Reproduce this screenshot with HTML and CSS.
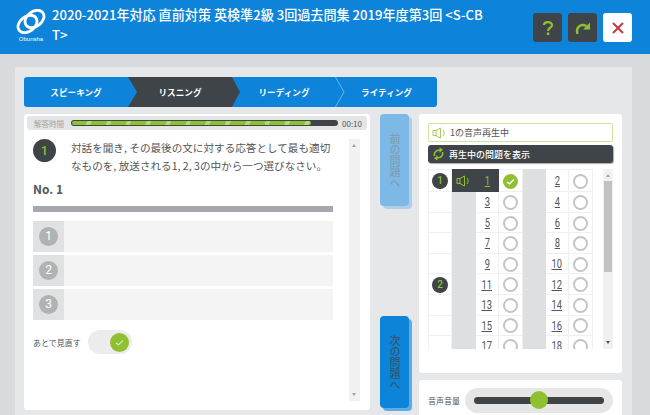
FILE: index.html
```html
<!DOCTYPE html>
<html lang="ja">
<head>
    <meta charset="UTF-8">
    <meta name="viewport" content="width=device-width, initial-scale=1.0">
    <title>2020-2021年対応 直前対策 英検準2級</title>
    <link rel="stylesheet" href="styles.css">
</head>
<body>
    <header class="header">
        <div class="logo">
            <svg width="32" height="25" viewBox="0 0 32 25">
                <ellipse cx="12.5" cy="15" rx="10.5" ry="7.5" transform="rotate(-38 12.5 15)" fill="none" stroke="#fff" stroke-width="2.8"/>
                <ellipse cx="19.5" cy="10" rx="10.5" ry="7.5" transform="rotate(-38 19.5 10)" fill="none" stroke="#fff" stroke-width="2.8"/>
            </svg>
            <span class="logo-name">Obunsha</span>
        </div>
        <h1 class="title">2020-2021年対応 直前対策 英検準2級 3回過去問集 2019年度第3回 &lt;S-CBT&gt;</h1>
        <div class="header-btns">
            <button class="head-btn">
                <svg width="14" height="16" viewBox="0 0 14 16"><path d="M3 5 C3 1.5 11 1 11 5 C11 8 7 7.500 7 11" fill="none" stroke="#8fc031" stroke-width="2.200"/><rect x="5.800" y="12.500" width="2.500" height="2.500" fill="#8fc031"/></svg>
            </button>
            <button class="head-btn">
                <svg width="16" height="14" viewBox="0 0 16 14"><path d="M2.500 13 C0.500 6 6 2 11.500 5" fill="none" stroke="#8fc031" stroke-width="2.400"/><path d="M15 1.500 V8.500 H8 Z" fill="#8fc031"/></svg>
            </button>
            <button class="head-btn head-btn-close">
                <svg width="12" height="12" viewBox="0 0 12 12"><path d="M1 1 L11 11 M11 1 L1 11" stroke="#c8383c" stroke-width="2"/></svg>
            </button>
        </div>
    </header>

    <div class="main">
        <div class="tabs">
            <div class="tab">スピーキング</div>
            <div class="tab tab-active">リスニング</div>
            <div class="tab">リーディング
                <svg class="tab-sep" width="10" height="30" viewBox="0 0 10 30"><path d="M0.500 0 L9 15 L0.500 30" fill="none" stroke="#6db4e8"/></svg>
            </div>
            <div class="tab">ライティング</div>
        </div>

        <div class="columns">
            <section class="question-panel">
                <div class="timer">
                    <span class="timer-label">解答時間</span>
                    <div class="timer-bar"><div class="timer-fill" style="width: 90%"></div></div>
                    <span class="timer-time">00:10</span>
                </div>
                <div class="question-body">
                    <div class="question-main">
                        <div class="question-head">
                            <span class="badge badge-big">1</span>
                            <p class="question-text">対話を聞き, その最後の文に対する応答として最も適切なものを, 放送される1, 2, 3の中から一つ選びなさい。</p>
                        </div>
                        <div class="question-no">No. 1</div>
                        <div class="rule"></div>
                        <div class="option"><div class="option-num"><span>1</span></div></div>
                        <div class="option"><div class="option-num"><span>2</span></div></div>
                        <div class="option"><div class="option-num"><span>3</span></div></div>
                        <div class="review">
                            <span class="review-label">あとで見直す</span>
                            <div class="toggle">
                                <span class="toggle-knob">
                                    <svg width="9" height="7" viewBox="0 0 9 7"><path d="M1 4 L3.500 5.800 L8 1.500" fill="none" stroke="#fff" stroke-width="1"/></svg>
                                </span>
                            </div>
                        </div>
                    </div>
                    <div class="scroll scroll-left">
                        <span class="arrow-up"></span>
                        <span class="arrow-down"></span>
                    </div>
                </div>
            </section>

            <div class="nav-col">
                <button class="nav-btn nav-prev">前の問題へ</button>
                <button class="nav-btn nav-next">次の問題へ</button>
            </div>

            <div class="side">
                <section class="answer-panel">
                    <div class="playing">
                        <svg class="speaker" width="15" height="12" viewBox="0 0 15 12"><path d="M1 3.500 H4 V8.500 H1 Z M4 3.500 L8.500 1 V11 L4 8.500 M11 3 C12.500 5 12.500 7 11 9" fill="none" stroke="#a6cc5c"/></svg>
                        1の音声再生中
                    </div>
                    <button class="show-btn">
                        <svg width="11" height="14" viewBox="0 0 11 14"><path d="M1.500 9 C0.500 5 4 2.500 7.500 3.500 M9.500 5 C10.500 9 7 11.500 3.500 10.500" fill="none" stroke="#8fc031" stroke-width="1.600"/><path d="M6.500 0.500 L10 2.500 L6.500 6 Z M4.500 8 L1 11.500 L4.500 13.500 Z" fill="#8fc031"/></svg>
                        再生中の問題を表示
                    </button>
                    <div class="sheet">
                        <table class="sheet-table">
                            <tr class="row-first">
                                <td><span class="badge">1</span></td>
                                <td class="cell-now">
                                    <svg width="15" height="12" viewBox="0 0 15 12"><path d="M1 3.500 H4 V8.500 H1 Z M4 3.500 L8.500 1 V11 L4 8.500 M11 3 C12.500 5 12.500 7 11 9" fill="none" stroke="#8fc031"/></svg>
                                </td>
                                <td class="cell-now cell-now-num"><span class="num">1</span></td>
                                <td>
                                    <span class="radio radio-on">
                                        <svg width="9" height="7" viewBox="0 0 9 7"><path d="M1 4 L3.500 5.800 L8 1.500" fill="none" stroke="#fff" stroke-width="1.300"/></svg>
                                    </span>
                                </td>
                                <td class="cell-grey"></td>
                                <td><span class="num">2</span></td>
                                <td><span class="radio"></span></td>
                            </tr>
                            <tr><td></td><td class="cell-grey"></td><td><span class="num">3</span></td><td><span class="radio"></span></td><td class="cell-grey"></td><td><span class="num">4</span></td><td><span class="radio"></span></td></tr>
                            <tr><td></td><td class="cell-grey"></td><td><span class="num">5</span></td><td><span class="radio"></span></td><td class="cell-grey"></td><td><span class="num">6</span></td><td><span class="radio"></span></td></tr>
                            <tr><td></td><td class="cell-grey"></td><td><span class="num">7</span></td><td><span class="radio"></span></td><td class="cell-grey"></td><td><span class="num">8</span></td><td><span class="radio"></span></td></tr>
                            <tr><td></td><td class="cell-grey"></td><td><span class="num">9</span></td><td><span class="radio"></span></td><td class="cell-grey"></td><td><span class="num">10</span></td><td><span class="radio"></span></td></tr>
                            <tr><td><span class="badge">2</span></td><td class="cell-grey"></td><td><span class="num">11</span></td><td><span class="radio"></span></td><td class="cell-grey"></td><td><span class="num">12</span></td><td><span class="radio"></span></td></tr>
                            <tr><td></td><td class="cell-grey"></td><td><span class="num">13</span></td><td><span class="radio"></span></td><td class="cell-grey"></td><td><span class="num">14</span></td><td><span class="radio"></span></td></tr>
                            <tr><td></td><td class="cell-grey"></td><td><span class="num">15</span></td><td><span class="radio"></span></td><td class="cell-grey"></td><td><span class="num">16</span></td><td><span class="radio"></span></td></tr>
                            <tr><td></td><td class="cell-grey"></td><td><span class="num">17</span></td><td><span class="radio"></span></td><td class="cell-grey"></td><td><span class="num">18</span></td><td><span class="radio"></span></td></tr>
                        </table>
                        <div class="scroll scroll-right">
                            <span class="arrow-up"></span>
                            <div class="scroll-thumb"></div>
                            <span class="arrow-down arrow-dark"></span>
                        </div>
                    </div>
                </section>
                <section class="volume-panel">
                    <span class="volume-label">音声音量</span>
                    <div class="volume-track">
                        <div class="volume-bar"><span class="volume-knob"></span></div>
                    </div>
                </section>
            </div>
        </div>
    </div>
</body>
</html>
```

FILE: styles.css
```css
* {
    box-sizing: border-box;
}
html, body {
    height: 415px;
    overflow: hidden;
}
body {
    margin: 0;
    background: #d9dadc;
    font-family: "Noto Sans CJK JP", "Noto Sans", sans-serif;
    color: #555;
}
button {
    font-family: inherit;
    border: none;
    padding: 0;
}

/* header */
.header {
    height: 54px;
    background: #0d84d9;
    padding: 5px 18px 0 15px;
    display: flex;
    align-items: flex-start;
}
.logo {
    width: 32px;
    margin-top: 4px;
    display: flex;
    flex-direction: column;
    align-items: center;
}
.logo-name {
    color: #fff;
    font-family: "Liberation Sans", sans-serif;
    font-size: 6px;
    line-height: 9px;
    margin-top: 1px;
}
.title {
    margin: 0 0 0 5px;
    width: 434px;
    color: #fff;
    font-size: 13.100px;
    font-weight: 500;
    line-height: 20px;
    word-break: break-all;
}
.header-btns {
    margin-left: auto;
    margin-top: 8px;
    display: flex;
    gap: 6px;
}
.head-btn {
    width: 29px;
    height: 29px;
    background: #3f4449;
    border-radius: 3px;
    display: flex;
    align-items: center;
    justify-content: center;
}
.head-btn-close {
    background: #fff;
}

/* main area */
.main {
    margin: 13px 18px 0 15px;
    height: 360px;
    background: #e6e7e9;
    padding: 10px 10px 0 9px;
}
.tabs {
    display: flex;
    height: 30px;
    width: 413px;
    background: #0d84d9;
    border-radius: 3px;
}
.tab {
    position: relative;
    width: 104px;
    color: #fff;
    font-size: 8.600px;
    font-weight: 700;
    line-height: 30px;
    text-align: center;
}
.tab:last-child {
    width: 101px;
}
.tab-active {
    width: 112px;
    margin-right: -8px;
    padding-right: 8px;
    background: #3f4449;
    clip-path: polygon(0 0, 104px 0, 112px 50%, 104px 100%, 0 100%, 9px 50%);
}
.tab-sep {
    position: absolute;
    right: -9px;
    top: 0;
}
.columns {
    display: flex;
    margin-top: 7px;
}

/* question */
.question-panel {
    width: 346px;
    height: 296px;
    background: #fff;
    border-radius: 3px;
    padding: 2px 3px;
}
.timer {
    height: 14px;
    background: #e4e5e6;
    border-radius: 3px;
    display: flex;
    align-items: center;
    padding: 0 3px 0 7px;
}
.timer-label {
    width: 37px;
    font-size: 7.500px;
    color: #a5a5a5;
}
.timer-bar {
    width: 267px;
    height: 6px;
    background: #3f4449;
    border-radius: 3px;
    padding: 1px;
}
.timer-fill {
    height: 4px;
    border-radius: 2px;
    background: repeating-linear-gradient(115deg, #8fc031 0 14px, #b5d77a 14px 18px);
}
.timer-time {
    margin-left: 4px;
    font-size: 8px;
    color: #555;
}
.question-body {
    display: flex;
    margin-top: 9px;
    padding-left: 6px;
}
.question-main {
    width: 300px;
}
.question-head {
    display: flex;
    height: 40px;
}
.badge {
    display: inline-flex;
    align-items: center;
    justify-content: center;
    width: 16px;
    height: 16px;
    border-radius: 50%;
    background: #3f4449;
    color: #8fc031;
    font-family: Roboto, sans-serif;
    font-size: 10px;
    font-weight: 500;
    vertical-align: middle;
}
.badge-big {
    flex: none;
    width: 23px;
    height: 23px;
    font-size: 12px;
}
.question-text {
    margin: 0 0 0 15px;
    font-size: 10.600px;
    line-height: 17.500px;
    color: #555;
    width: 264px;
}
.question-no {
    margin-top: 2px;
    font-size: 12px;
    font-weight: 700;
    line-height: 16px;
}
.rule {
    height: 6px;
    margin: 9px 0 9px;
    background: #a5a8ac;
}
.option {
    height: 31px;
    margin-bottom: 3px;
    background: #f4f4f4;
}
.option-num {
    width: 31px;
    height: 100%;
    background: #e0e1e2;
    display: flex;
    align-items: center;
    justify-content: center;
}
.option-num span {
    width: 19px;
    height: 19px;
    border-radius: 50%;
    background: #b1b2b4;
    color: #fff;
    font-family: Roboto, sans-serif;
    font-size: 12px;
    line-height: 19px;
    text-align: center;
}
.review {
    display: flex;
    align-items: center;
    margin-top: 10px;
}
.review-label {
    width: 55px;
    font-size: 8px;
}
.toggle {
    width: 44px;
    height: 24px;
    border-radius: 12px;
    background: #ececec;
    display: flex;
    align-items: center;
    justify-content: flex-end;
    padding-right: 3px;
}
.toggle-knob {
    width: 19px;
    height: 19px;
    border-radius: 50%;
    background: #8fc031;
    display: flex;
    align-items: center;
    justify-content: center;
}

/* scroll bars */
.scroll {
    position: relative;
    width: 11px;
    background: #f1f1f1;
}
.scroll-left {
    height: 262px;
    margin-left: 16px;
}
.scroll-right {
    height: 180px;
    margin-left: 10px;
    padding-top: 12px;
}
.scroll-thumb {
    height: 91px;
    background: #c1c1c1;
    margin: 0 1px;
}
.arrow-up,
.arrow-down {
    position: absolute;
    left: 3px;
    width: 0;
    height: 0;
    border-left: 2.500px solid transparent;
    border-right: 2.500px solid transparent;
}
.arrow-up {
    top: 5px;
    border-bottom: 3px solid #a3a3a3;
}
.arrow-down {
    bottom: 5px;
    border-top: 3px solid #a3a3a3;
}
.arrow-dark {
    border-top-color: #505050;
}

/* prev / next */
.nav-col {
    width: 29px;
    height: 294px;
    margin: 0 10px;
    display: flex;
    flex-direction: column;
    justify-content: space-between;
}
.nav-btn {
    width: 29px;
    height: 92px;
    border-radius: 4px;
    writing-mode: vertical-rl;
    font-size: 11px;
    font-weight: 500;
    line-height: 29px;
    text-align: center;
}
.nav-prev {
    background: #7cb9e6;
    color: #7f9db5;
    box-shadow: 3px 3px 0 #b0cfe7;
}
.nav-next {
    background: #0d84d9;
    color: #34566f;
    box-shadow: 3px 3px 0 #5cabe4;
}

/* answer sheet */
.side {
    width: 203px;
}
.answer-panel {
    height: 259px;
    background: #fff;
    border-radius: 3px;
    padding: 9px 9px 0;
}
.playing {
    height: 19px;
    border: 1px solid #cfe3a0;
    border-radius: 2px;
    display: flex;
    align-items: center;
    gap: 3px;
    padding-left: 3px;
    font-size: 9px;
}
.show-btn {
    width: 185px;
    height: 18px;
    margin-top: 3px;
    background: #3f4449;
    color: #fff;
    border-radius: 3px;
    box-shadow: 1px 1px 1px #aaa;
    display: flex;
    align-items: center;
    gap: 5px;
    padding-left: 5px;
    font-size: 9px;
    font-weight: 500;
}
.sheet {
    display: flex;
    align-items: flex-start;
    height: 180px;
    margin-top: 6px;
    overflow: hidden;
}
.sheet-table {
    border-collapse: collapse;
    table-layout: fixed;
    width: 164px;
    font-size: 12px;
    line-height: 14px;
}
.sheet-table td {
    width: 23.400px;
    height: 20.600px;
    padding: 0;
    border: 1px solid #f0f0f0;
    text-align: center;
    vertical-align: middle;
}
.row-first td {
    height: 22px;
}
.sheet-table .cell-grey {
    background: #dedfe0;
    border-color: #dedfe0;
}
.sheet-table .cell-now {
    background: #3f4449;
    border-color: #3f4449;
}
.cell-now svg {
    display: block;
    margin: 0 auto;
}
.num {
    display: inline-block;
    font-family: Roboto, sans-serif;
    font-size: 12px;
    line-height: 14px;
    color: #555;
    text-decoration: underline;
    transform: scaleX(0.78);
}
.cell-now-num .num {
    color: #8fc031;
}
.radio {
    display: inline-flex;
    align-items: center;
    justify-content: center;
    width: 15px;
    height: 15px;
    border: 2px solid #c4c4c4;
    border-radius: 50%;
    vertical-align: middle;
}
.radio-on {
    background: #8fc031;
    border-color: #8fc031;
}

/* volume */
.volume-panel {
    height: 60px;
    margin-top: 7px;
    background: #fff;
    border-radius: 3px;
    padding: 8px 9px 0;
    display: flex;
    align-items: flex-start;
}
.volume-label {
    width: 37px;
    font-size: 8px;
    line-height: 25px;
}
.volume-track {
    width: 148px;
    height: 25px;
    border-radius: 13px;
    background: #e6e6e6;
    padding: 9px;
}
.volume-bar {
    position: relative;
    height: 7px;
    border-radius: 4px;
    background: #3f4449;
}
.volume-knob {
    position: absolute;
    left: 56px;
    top: -6px;
    width: 18px;
    height: 18px;
    border-radius: 50%;
    background: #8fc031;
}
```
